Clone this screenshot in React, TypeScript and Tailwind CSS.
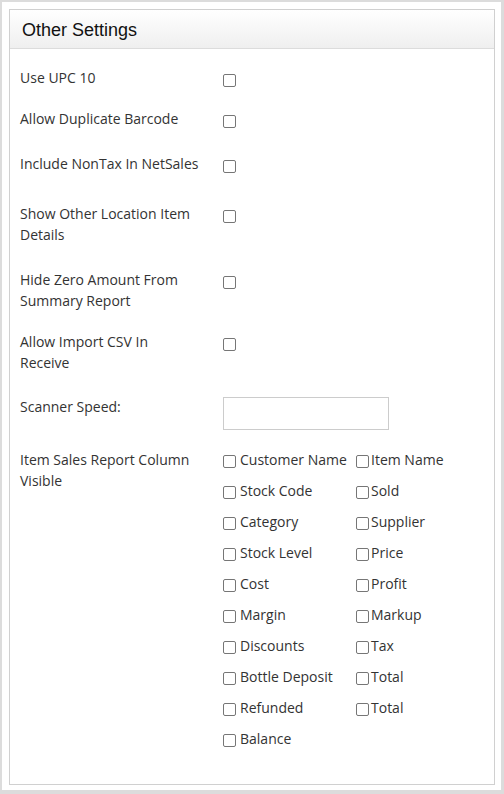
import React from "react";

const Box = ({ className = "" }: { className?: string }) => (
  <span
    className={`inline-block w-[13px] h-[13px] shrink-0 border border-[#767676] rounded-[2px] bg-white ${className}`}
  />
);

const rows: { label: string; h: string; kind: "check" | "input" }[] = [
  { label: "Use UPC 10", h: "h-[41px]", kind: "check" },
  { label: "Allow Duplicate Barcode", h: "h-[45px]", kind: "check" },
  { label: "Include NonTax In NetSales", h: "h-[50px]", kind: "check" },
  { label: "Show Other Location Item Details", h: "h-[66px]", kind: "check" },
  { label: "Hide Zero Amount From Summary Report", h: "h-[62px]", kind: "check" },
  { label: "Allow Import CSV In Receive", h: "h-[65px]", kind: "check" },
  { label: "Scanner Speed:", h: "h-[53px]", kind: "input" },
];

const cols = [
  "Customer Name",
  "Item Name",
  "Stock Code",
  "Sold",
  "Category",
  "Supplier",
  "Stock Level",
  "Price",
  "Cost",
  "Profit",
  "Margin",
  "Markup",
  "Discounts",
  "Tax",
  "Bottle Deposit",
  "Total",
  "Refunded",
  "Total",
  "Balance",
];

export default function App() {
  return (
    <div
      className="w-[504px] h-[794px] bg-white border-[#dcdcdc] border-l-2 border-t-2 border-r-[3px] border-b-[4px] pl-[7px] pt-[7px] text-[14px] leading-[21px] text-[#333]"
      style={{ fontFamily: '"Open Sans", sans-serif' }}
    >
      <div className="w-[486px] h-[776px] border border-[#d0d0d0] flex flex-col">
        <div className="h-[39px] border-b border-[#dcdcdc] bg-gradient-to-b from-white to-[#efefef] flex items-center pl-[12px]">
          <span
            className="text-[18px] leading-[22px] text-[#111] pt-[1px]"
            style={{ fontFamily: '"Liberation Sans", Arial, sans-serif' }}
          >
            Other Settings
          </span>
        </div>
        <div className="pt-[18px] pl-[10px]">
          {rows.map((r, i) => (
            <div key={i} className={`flex items-start ${r.h}`}>
              <div className="w-[180px]">{r.label}</div>
              <div className="ml-[23px]">
                {r.kind === "check" ? (
                  <Box className="mt-[7px]" />
                ) : (
                  <div className="mt-[1px] w-[166px] h-[33px] border border-[#cccccc] bg-white" />
                )}
              </div>
            </div>
          ))}
          <div className="flex items-start">
            <div className="w-[180px]">Item Sales Report Column Visible</div>
            <div className="ml-[23px] grid grid-cols-[133px_auto]">
              {cols.map((c, i) => (
                <div key={i} className="h-[31px] flex items-start">
                  <Box className="mt-[6px]" />
                  <span className={`${i % 2 === 0 ? "ml-[4px]" : "ml-[2px]"} whitespace-nowrap`}>{c}</span>
                </div>
              ))}
            </div>
          </div>
        </div>
      </div>
    </div>
  );
}
